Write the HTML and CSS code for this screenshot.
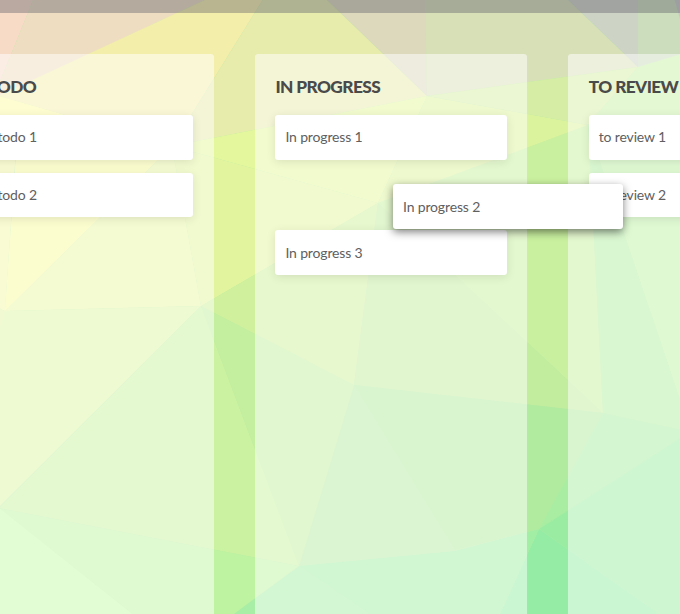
FILE: index.html
```
<!DOCTYPE html>
<html lang="en">
<head>
<meta charset="utf-8">
<title>Board</title>
<link rel="stylesheet" href="styles.css">
</head>
<body>
<svg class="backdrop" viewBox="0 0 680 614" aria-hidden="true">
  <rect width="680" height="614" fill="#b7eba4"/>
  <path fill="#f7dbc7" d="M-2-2H34L12 52L-2 86Z"/>
  <path fill="#efddc1" d="M34-2H209L-2 97V86L12 52Z"/>
  <path fill="#f3eeaa" d="M209-2H264L172 146L-2 96Z"/>
  <path fill="#e7ebac" d="M264-2H325L427 96L172 146Z"/>
  <path fill="#dcd9bd" d="M325-2H425L427 96Z"/>
  <path fill="#d8e0b8" d="M425-2H566L638 67L427 96Z"/>
  <path fill="#cdd3c5" d="M566-2H638V67Z"/>
  <path fill="#cbddbd" d="M638-2H682V55L638 67Z"/>
  <path fill="#c6cac6" d="M674-2H682V26Z"/>
  <path fill="#fdfba5" d="M-2 96L172 146L5 311L20 103Z"/>
  <path fill="#f7fa9f" d="M20 103L172 146L5 311Z"/>
  <path fill="#fdfba3" d="M-2 96L172 146V150H-2Z"/>
  <path fill="#f3f7a5" d="M-2 150H16L5 311L-2 308Z"/>
  <path fill="#e9f5a3" d="M172 146L201 306L5 311Z"/>
  <path fill="#e5f79d" d="M172 146L427 96L378 203Z"/>
  <path fill="#e2f59e" d="M172 146L378 203L201 306Z"/>
  <path fill="#e3f2a5" d="M-2 308L5 311L4 330L-2 400Z"/>
  <path fill="#dcf4a4" d="M5 311L4 330L-2 400V508L-1 507Z"/>
  <path fill="#ddf5a3" d="M5 311L201 306L-1 507V330Z"/>
  <path fill="#cbf2a0" d="M201 306L299 566L-1 508Z"/>
  <path fill="#c3ef9e" d="M201 306L354 385L299 566Z"/>
  <path fill="#d0f09d" d="M201 306L378 203L354 385Z"/>
  <path fill="#c2ec9e" d="M378 203L603 413L354 385Z"/>
  <path fill="#c9f09f" d="M378 203L588 125L603 413Z"/>
  <path fill="#dcf39d" d="M427 96L588 125L378 203Z"/>
  <path fill="#d6eda5" d="M427 96L638 67L588 125Z"/>
  <path fill="#c9f0a9" d="M638 67L682 54V410L588 125Z"/>
  <path fill="#b3efa1" d="M588 125L682 404V430L603 413Z"/>
  <path fill="#bff3a7" d="M588 125L682 130V404Z"/>
  <path fill="#b1eb9f" d="M354 385L603 413L539 529L455 550Z"/>
  <path fill="#a8eda1" d="M603 413L682 430V437L539 529Z"/>
  <path fill="#9beca3" d="M539 529L682 437V616H662Z"/>
  <path fill="#94eca5" d="M539 529L662 616H499Z"/>
  <path fill="#a2eea5" d="M299 566L455 551L539 529L499 616H372Z"/>
  <path fill="#a8eea6" d="M299 566L372 616H231Z"/>
  <path fill="#bef3a2" d="M-1 508L299 566L231 616H135Z"/>
  <path fill="#c5f9a7" d="M-2 507L135 616H-2Z"/>
</svg>
<div class="app">
  <header class="topbar"></header>
  <main class="board">
    <section class="column column-todo">
      <h2 class="title">TODO</h2>
      <div class="card"><span>todo 1</span></div>
      <div class="card"><span>todo 2</span></div>
    </section>
    <section class="column">
      <h2 class="title">IN PROGRESS</h2>
      <div class="card"><span>In progress 1</span></div>
      <div class="slot"></div>
      <div class="card"><span>In progress 3</span></div>
    </section>
    <section class="column">
      <h2 class="title">TO REVIEW</h2>
      <div class="card"><span>to review 1</span></div>
      <div class="card"><span>to review 2</span></div>
    </section>
  </main>
  <div class="card dragging"><span>In progress 2</span></div>
</div>
</body>
</html>
```

FILE: styles.css
```
* { box-sizing: border-box; }
body {
  margin: 0;
  overflow: hidden;
  color: #4a4a4a;
  font-family: Lato, sans-serif;
}
.backdrop {
  position: absolute;
  inset: 0;
  width: 680px;
  height: 614px;
}
.app {
  position: relative;
  display: flex;
  flex-direction: column;
  width: 680px;
  height: 614px;
  overflow: hidden;
}
.topbar {
  flex: none;
  height: 13px;
  background: rgba(95, 95, 105, 0.4);
}
.board {
  flex: 1;
  display: flex;
  gap: 41px;
  margin-left: -33px;
  padding-top: 41px;
}
.column {
  flex: none;
  display: flex;
  flex-direction: column;
  gap: 13px;
  width: 272.4px;
  padding: 20.4px;
  border-radius: 3px 3px 0 0;
  background: rgba(255, 255, 255, 0.5);
}
.column-todo {
  width: 247px;
  padding-right: 21px;
}
.title {
  margin: 0;
  height: 27.8px;
  font: 900 17.3px/25px Lato, sans-serif;
  letter-spacing: -0.6px;
  white-space: nowrap;
}
.card,
.slot {
  flex: none;
  height: 44.6px;
}
.card {
  display: flex;
  align-items: center;
  padding: 0 10px 1px;
  border-radius: 3px;
  background: #fff;
  box-shadow: 0 2px 10px rgba(0, 0, 0, 0.1);
  color: #606060;
  font-size: 14px;
  letter-spacing: -0.15px;
  white-space: nowrap;
}
.dragging {
  position: absolute;
  left: 393px;
  top: 184.3px;
  width: 230.4px;
  box-shadow: 0 3px 9px rgba(0, 0, 0, 0.5);
}
```
